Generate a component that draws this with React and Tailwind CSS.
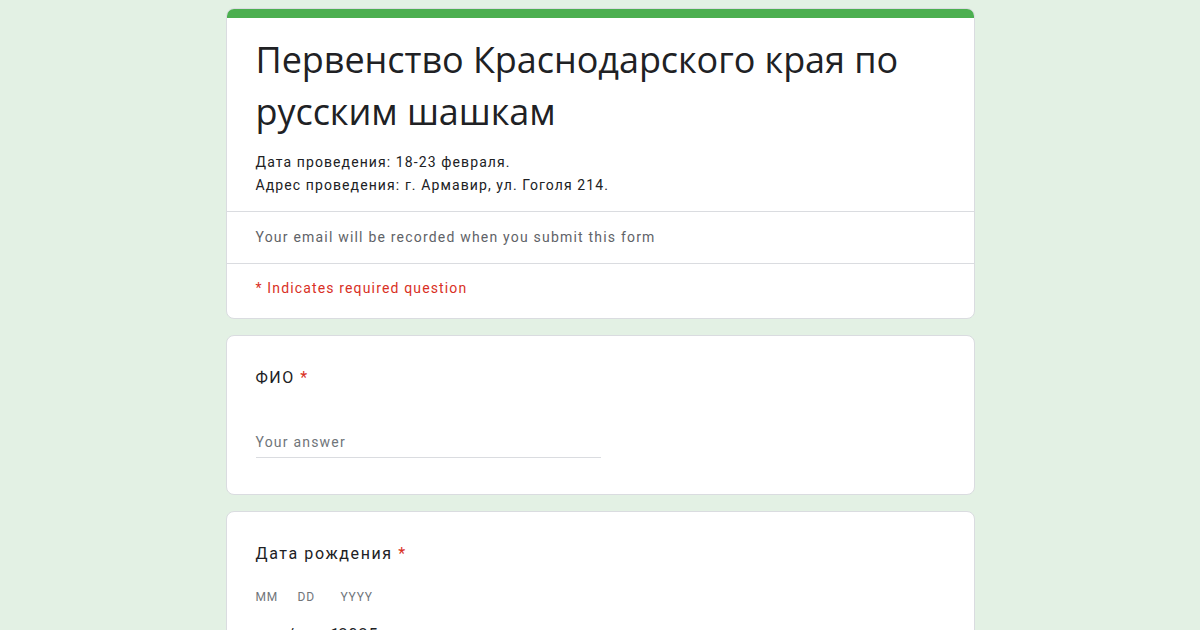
import React from "react";

export default function App() {
  return (
    <div className="h-[630px] w-full bg-[#e3f1e4] overflow-hidden" style={{ fontFamily: "Roboto, 'Liberation Sans', sans-serif" }}>
      <div className="mx-auto w-[749px] pt-[8px] flex flex-col gap-[16px]">
        {/* Header card */}
        <div className="bg-white rounded-[8px] border border-[#dadce0] overflow-hidden">
          <div className="h-[10px] bg-[#4caf50] -mx-px -mt-px"></div>
          <div className="px-[29px] pt-[16px] pb-[14px]">
            <h1 className="text-[36px] leading-[52px] text-[#202124] tracking-[-0.05px]" style={{ fontFamily: "'Open Sans', Roboto, sans-serif" }}>
              Первенство Краснодарского края по русским шашкам
            </h1>
            <div className="mt-[13px] text-[14px] leading-[23px] text-[#202124] tracking-[1.1px]">
              <div>Дата проведения: 18-23 февраля.</div>
              <div>Адрес проведения: г. Армавир, ул. Гоголя 214.</div>
            </div>
          </div>
          <div className="border-t border-[#dadce0] px-[29px] h-[52px] flex items-center text-[14px] text-[#5f6368] tracking-[1.2px]">
            Your email will be recorded when you submit this form
          </div>
          <div className="border-t border-[#dadce0] px-[29px] h-[55px] flex items-center text-[14px] text-[#d93025] pb-[6px] tracking-[1.15px]">
            * Indicates required question
          </div>
        </div>

        {/* ФИО */}
        <div className="bg-white rounded-[8px] border border-[#dadce0] h-[160px] px-[29px] pt-[30px]">
          <div className="text-[16px] text-[#202124] tracking-[1.5px]">
            ФИО <span className="text-[#d93025]">*</span>
          </div>
          <div className="mt-[42px] w-[345px] border-b border-[#dadce0] pb-[4px] text-[14px] text-[#70757a] tracking-[1.2px]">
            Your answer
          </div>
        </div>

        {/* Дата рождения */}
        <div className="bg-white rounded-[8px] border border-[#dadce0] h-[200px] px-[29px] pt-[30px]">
          <div className="text-[16px] text-[#202124] tracking-[1.6px]">
            Дата рождения <span className="text-[#d93025]">*</span>
          </div>
          <div className="mt-[22px] flex text-[12px] text-[#70757a] tracking-[0.8px]">
            <span className="w-[42px]">MM</span>
            <span className="w-[43px]">DD</span>
            <span>YYYY</span>
          </div>
          <div className="mt-[17px] flex text-[16px] text-[#202124] tracking-[1px]">
            <span className="w-[32px]"></span>
            <span className="w-[43px]">/</span>
            <span className="w-[8px]">1</span>
            <span>2025</span>
          </div>
        </div>
      </div>
    </div>
  );
}
